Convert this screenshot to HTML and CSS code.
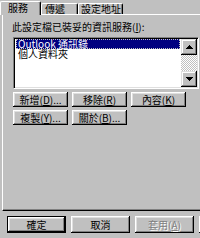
FILE: index.html
```html
<!DOCTYPE html>
<html>
<head>
<meta charset="utf-8">
<link rel="stylesheet" href="styles.css">
</head>
<body>
<div class="win">
  <div class="tabs">
    <div class="tab active">服務</div>
    <div class="tab t2">傳遞</div>
    <div class="tab t3">設定地址</div>
  </div>
  <div class="panel">
    <div class="label">此設定檔已裝妥的資訊服務(<u>I</u>):</div>
    <div class="listbox">
      <div class="items">
        <div class="item sel"><span>Outlook 通訊錄</span></div>
        <div class="item">個人資料夾</div>
      </div>
      <div class="scroll">
        <div class="sbtn"><svg width="7" height="4" viewBox="0 0 7 4"><path d="M3 0h1v1h1v1h1v1h1v1H0V3h1V2h1V1h1z" fill="#000"/></svg></div>
        <div class="track"></div>
        <div class="sbtn"><svg width="7" height="4" viewBox="0 0 7 4"><path d="M0 0h7v1H6v1H5v1H4v1H3V3H2V2H1V1H0z" fill="#000"/></svg></div>
      </div>
    </div>
    <div class="btnrow">
      <div class="btn">新增(<u>D</u>)...</div>
      <div class="btn">移除(<u>R</u>)</div>
      <div class="btn">內容(<u>K</u>)</div>
    </div>
    <div class="btnrow">
      <div class="btn">複製(<u>Y</u>)...</div>
      <div class="btn">關於(<u>B</u>)...</div>
    </div>
  </div>
  <div class="footer">
    <div class="btn big default">確定</div>
    <div class="btn big">取消</div>
    <div class="btn big disabled">套用(<u>A</u>)</div>
    <div class="btn big"></div>
  </div>
</div>
</body>
</html>
```

FILE: styles.css
```css
html, body {
  margin: 0;
  padding: 0;
}
body {
  width: 200px;
  height: 238px;
  overflow: hidden;
  background: #c0c0c0;
  font-family: "Noto Sans CJK TC", "Liberation Sans", sans-serif;
  font-size: 10px;
  color: #000;
}
.win {
  width: 200px;
  overflow: hidden;
  padding-top: 1px;
}
.tabs {
  display: flex;
  align-items: flex-end;
  height: 13px;
  position: relative;
  z-index: 1;
}
.tab {
  box-sizing: border-box;
  height: 11px;
  line-height: 10px;
  border-top: 1px solid #fff;
  border-left: 1px solid #fff;
  border-right: 1px solid #000;
  box-shadow: inset -1px 0 #808080;
  border-top-left-radius: 2px;
  border-top-right-radius: 2px;
  background: #c0c0c0;
  white-space: nowrap;
}
.tab.active {
  width: 41px;
  height: 14px;
  margin-bottom: -1px;
  padding-left: 7px;
  line-height: 12px;
}
.tab.t2 {
  width: 37px;
  padding-left: 3px;
}
.tab.t3 {
  width: 45px;
  padding-left: 2px;
}
.panel {
  box-sizing: border-box;
  margin-left: 2px;
  width: 230px;
  height: 197px;
  border-top: 1px solid #fff;
  border-left: 1px solid #fff;
  border-bottom: 1px solid #000;
  box-shadow: inset 0 -1px #808080;
  padding: 5px 0 0 10px;
}
.label {
  height: 14px;
  line-height: 14px;
  margin-left: -1px;
  white-space: nowrap;
}
.listbox {
  box-sizing: border-box;
  margin-top: 3px;
  width: 186px;
  height: 52px;
  background: #fff;
  border-top: 1px solid #808080;
  border-left: 1px solid #808080;
  border-right: 1px solid #fff;
  border-bottom: 1px solid #fff;
  box-shadow: inset 1px 1px #000, inset -1px -1px #dfdfdf;
  padding: 1px;
  display: flex;
}
.items {
  flex: 1;
  padding: 0 1px;
}
.item {
  height: 10px;
  line-height: 10px;
  padding-left: 2px;
  white-space: nowrap;
}
.item.sel {
  background: #000080;
  color: #fff;
  outline: 1px dotted #c0c0c0;
  outline-offset: -1px;
}
.scroll {
  width: 16px;
  display: flex;
  flex-direction: column;
}
.sbtn {
  height: 16px;
  background: #c0c0c0;
  box-shadow: inset -1px -1px #000, inset 1px 1px #dfdfdf, inset -2px -2px #808080, inset 2px 2px #fff;
  display: flex;
  align-items: center;
  justify-content: center;
}
.track {
  flex: 1;
  background: repeating-conic-gradient(#fff 0 25%, #c0c0c0 0 50%) 0 0 / 2px 2px;
}
.btnrow {
  display: flex;
  gap: 4px;
  margin-top: 3px;
}
.btnrow:first-of-type {
  margin-top: 14px;
}
.btn {
  box-sizing: border-box;
  width: 55px;
  height: 15px;
  line-height: 15px;
  text-align: center;
  white-space: nowrap;
  overflow: hidden;
  background: #c0c0c0;
  box-shadow: inset -1px -1px #000, inset 1px 1px #fff, inset -2px -2px #808080, inset 2px 2px #dfdfdf;
}
.footer {
  display: flex;
  gap: 5px;
  padding-left: 7px;
  margin-top: 5px;
}
.btn.big {
  width: 59px;
  height: 17px;
  line-height: 17px;
  flex: none;
}
.btn.default {
  border: 1px solid #000;
  line-height: 15px;
}
.btn.disabled {
  color: #808080;
  text-shadow: 1px 1px #fff;
}
```
